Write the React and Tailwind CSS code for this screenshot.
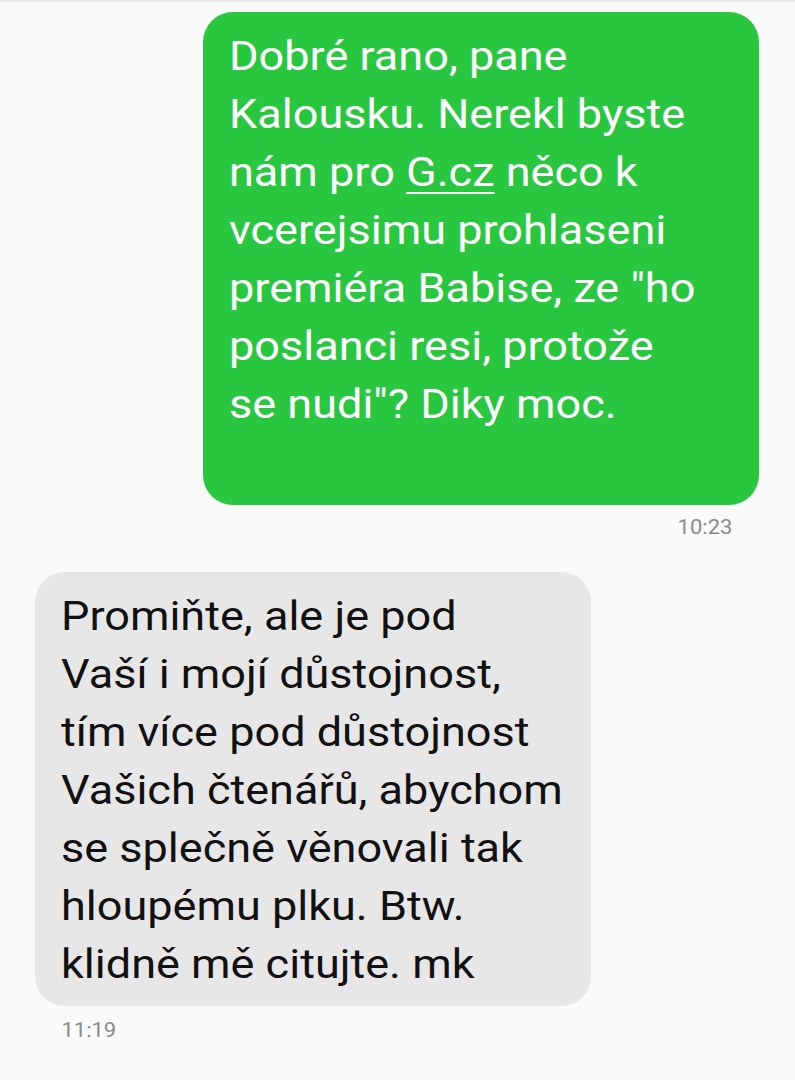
const OUT_LINES = [
  "Dobré rano, pane",
  "Kalousku. Nerekl byste",
  null,
  "vcerejsimu prohlaseni",
  "premiéra Babise, ze \"ho",
  "poslanci resi, protože",
  "se nudi\"? Diky moc.",
];

const IN_LINES = [
  "Promiňte, ale je pod",
  "Vaší i mojí důstojnost,",
  "tím více pod důstojnost",
  "Vašich čtenářů, abychom",
  "se splečně věnovali tak",
  "hloupému plku. Btw.",
  "klidně mě citujte. mk",
];

// the screenshot is a little wider than tall, so text is stretched sideways
export default function App() {
  return (
    <div className="min-h-[1080px] border-t-2 border-[#e6e6e6] bg-[#fafafa] font-['Roboto',sans-serif]">
      {/* outgoing */}
      <div className="mt-[10px] flex flex-col items-end pr-[36px]">
        <div className="w-[556px] rounded-[30px] bg-[#29c73f] pl-[26px] pr-4 pt-[16px] pb-[71px] text-[40px] leading-[58px] text-white">
          {OUT_LINES.map((line, i) =>
            line === null ? (
              <div key={i} className="origin-left scale-x-[1.126] whitespace-nowrap">
                nám pro <span className="underline decoration-2 underline-offset-[6px]">G.cz</span> něco k
              </div>
            ) : (
              <div key={i} className="origin-left scale-x-[1.126] whitespace-nowrap">{line}</div>
            )
          )}
        </div>
        <div className="mt-[10px] origin-right scale-x-[1.1] pr-[24px] text-[20px] leading-[24px] text-[#8a8a8a]">10:23</div>
      </div>

      {/* incoming */}
      <div className="mt-[33px] flex flex-col items-start pl-[35px]">
        <div className="w-[556px] rounded-[30px] bg-[#e7e7e7] pl-[26px] pr-4 pt-[16px] pb-[12px] text-[40px] leading-[58px] text-[#111111]">
          {IN_LINES.map((line, i) => (
            <div key={i} className="origin-left scale-x-[1.126] whitespace-nowrap">{line}</div>
          ))}
        </div>
        <div className="mt-[12px] origin-left scale-x-[1.1] pl-[24px] text-[20px] leading-[24px] text-[#8a8a8a]">11:19</div>
      </div>
    </div>
  );
}
